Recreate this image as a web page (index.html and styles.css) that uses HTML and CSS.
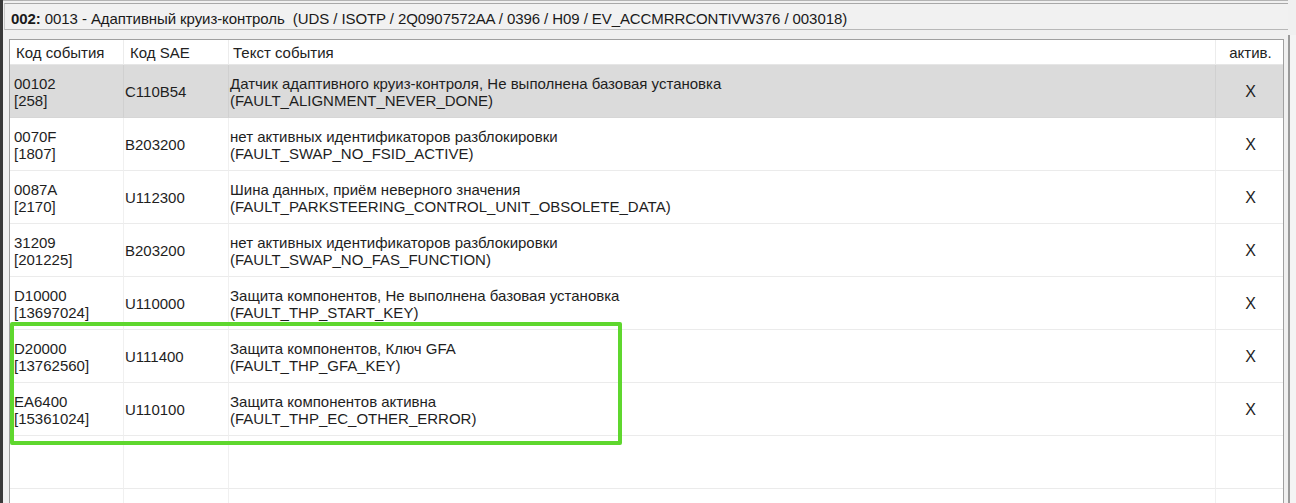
FILE: index.html
```html
<!DOCTYPE html>
<html lang="ru">
<head>
<meta charset="utf-8">
<title>Журнал событий</title>
<link rel="stylesheet" href="styles.css">
</head>
<body>
<div class="app">
  <div class="edge"></div>
  <div class="main">
    <div class="titlebar"><b>002:</b> 0013 - Адаптивный круиз-контроль&nbsp; (UDS / ISOTP / 2Q0907572AA / 0396 / H09 / EV_ACCMRRCONTIVW376 / 003018)</div>
    <div class="panel">
      <div class="grid">
        <div class="hd c1">Код события</div>
        <div class="hd c2">Код SAE</div>
        <div class="hd c3">Текст события</div>
        <div class="hd c4">актив.</div>

        <div class="row sel">
          <div class="cell c1">00102<br>[258]</div>
          <div class="cell c2">C110B54</div>
          <div class="cell c3">Датчик адаптивного круиз-контроля, Не выполнена базовая установка<br>(FAULT_ALIGNMENT_NEVER_DONE)</div>
          <div class="cell c4">X</div>
        </div>
        <div class="row">
          <div class="cell c1">0070F<br>[1807]</div>
          <div class="cell c2">B203200</div>
          <div class="cell c3">нет активных идентификаторов разблокировки<br>(FAULT_SWAP_NO_FSID_ACTIVE)</div>
          <div class="cell c4">X</div>
        </div>
        <div class="row">
          <div class="cell c1">0087A<br>[2170]</div>
          <div class="cell c2">U112300</div>
          <div class="cell c3">Шина данных, приём неверного значения<br>(FAULT_PARKSTEERING_CONTROL_UNIT_OBSOLETE_DATA)</div>
          <div class="cell c4">X</div>
        </div>
        <div class="row">
          <div class="cell c1">31209<br>[201225]</div>
          <div class="cell c2">B203200</div>
          <div class="cell c3">нет активных идентификаторов разблокировки<br>(FAULT_SWAP_NO_FAS_FUNCTION)</div>
          <div class="cell c4">X</div>
        </div>
        <div class="row">
          <div class="cell c1">D10000<br>[13697024]</div>
          <div class="cell c2">U110000</div>
          <div class="cell c3">Защита компонентов, Не выполнена базовая установка<br>(FAULT_THP_START_KEY)</div>
          <div class="cell c4">X</div>
        </div>
        <div class="row">
          <div class="cell c1">D20000<br>[13762560]</div>
          <div class="cell c2">U111400</div>
          <div class="cell c3">Защита компонентов, Ключ GFA<br>(FAULT_THP_GFA_KEY)</div>
          <div class="cell c4">X</div>
        </div>
        <div class="row">
          <div class="cell c1">EA6400<br>[15361024]</div>
          <div class="cell c2">U110100</div>
          <div class="cell c3">Защита компонентов активна<br>(FAULT_THP_EC_OTHER_ERROR)</div>
          <div class="cell c4">X</div>
        </div>
        <div class="row">
          <div class="cell c1"></div>
          <div class="cell c2"></div>
          <div class="cell c3"></div>
          <div class="cell c4"></div>
        </div>
        <div class="row">
          <div class="cell c1"></div>
          <div class="cell c2"></div>
          <div class="cell c3"></div>
          <div class="cell c4"></div>
        </div>
      </div>
      <div class="highlight"></div>
    </div>
  </div>
  <div class="rightedge"></div>
</div>
</body>
</html>
```
FILE: styles.css
```css
html, body {
  margin: 0;
  padding: 0;
  height: 100%;
  overflow: hidden;
}
body {
  background: #f0f0f0;
  font-family: "Liberation Sans", Arial, sans-serif;
  color: #1e1e1e;
  font-size: 15px;
}
.app {
  display: flex;
  height: 503px;
}
.edge {
  width: 3px;
  background: #3a3a3a;
  flex: none;
}
.main {
  flex: 1;
  display: flex;
  flex-direction: column;
  padding: 0 0 0 1px;
  border-top: 1px solid #b4b4b4;
}
.titlebar {
  margin-top: 2px;
  height: 27px;
  box-sizing: border-box;
  border-top: 1px solid #a8a8a8;
  border-bottom: 1px solid #b8b8b8;
  border-left: 1px solid #c8c8c8;
  background: #f1f1f1;
  padding: 6px 0 0 6px;
  font-size: 15px;
  letter-spacing: -0.08px;
  color: #1a1a1a;
  white-space: nowrap;
}
.titlebar b {
  font-weight: bold;
}
.panel {
  position: relative;
  margin: 9px 4px 0 5px;
  flex: 1;
  background: #fff;
  border: 1px solid #a0a0a0;
  border-bottom: none;
  overflow: hidden;
}
.grid {
  display: grid;
  grid-template-columns: 114px 105px 987px 1fr;
  grid-auto-rows: 53px;
  grid-template-rows: 25px;
}
.row {
  display: contents;
}
.hd {
  display: flex;
  align-items: center;
  background: #fff;
  border-right: 1px solid #ececec;
  border-bottom: 1px solid #e6e6e6;
  box-sizing: border-box;
  color: #222;
}
.hd.c1 { padding-left: 6px; }
.hd.c2 { padding-left: 6px; }
.hd.c3 { padding-left: 4px; }
.hd.c4 { justify-content: center; border-right: none; padding-left: 2px; }
.cell {
  display: flex;
  align-items: center;
  line-height: 17px;
  padding-top: 1px;
  box-sizing: border-box;
  border-right: 1px solid #f0f0f0;
  border-bottom: 1px solid #ebebeb;
  background: #fff;
}
.cell.c1 { padding-left: 4px; }
.cell.c2 { padding-left: 1px; }
.cell.c3 { padding-left: 1px; }
.cell.c4 { justify-content: center; border-right: none; font-size: 16px; padding-left: 2px; }
.sel .cell {
  background: #dbdbdb;
  border-right-color: #d0d0d0;
  border-bottom-color: #d6d6d6;
}
.highlight {
  position: absolute;
  left: 0;
  top: 282px;
  width: 612px;
  height: 123px;
  box-sizing: border-box;
  border: 4px solid #5fd72e;
  border-radius: 2px;
}
.rightedge {
  width: 6px;
  flex: none;
  border-left: 2px solid #9a9a9a;
  background: #f4f4f4;
  margin-top: 35px;
}
```
